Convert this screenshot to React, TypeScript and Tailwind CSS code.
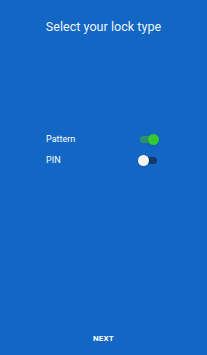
import React, { useState } from 'react';

function Toggle({ on, onClick }: { on: boolean; onClick: () => void }) {
  return (
    <button onClick={onClick} className="relative w-[21px] h-[11px] flex items-center">
      <span className={`absolute left-[2px] right-[2px] h-[7px] rounded-full ${on ? 'bg-[#2f8f6a]' : 'bg-[#17386a]'}`} />
      <span
        className={`absolute top-0 w-[11px] h-[11px] rounded-full shadow-sm ${on ? 'right-0 bg-[#34c934]' : 'left-0 bg-[#f5f5f5]'}`}
      />
    </button>
  );
}

export default function App() {
  const [pattern, setPattern] = useState(true);
  const [pin, setPin] = useState(false);

  return (
    <div className="w-[207px] h-[355px] bg-[#1367c4] flex flex-col text-white" style={{ fontFamily: 'Roboto, "Liberation Sans", sans-serif' }}>
      {/* 제목 */}
      <h1 className="mt-[19px] text-center text-[12.6px] leading-[16px] text-white/95">Select your lock type</h1>

      {/* 옵션 */}
      <div className="mt-[99px] pl-[46px] pr-[48px] flex flex-col gap-[10px]">
        {[
          { label: 'Pattern', on: pattern, toggle: () => setPattern(!pattern) },
          { label: 'PIN', on: pin, toggle: () => setPin(!pin) },
        ].map((row) => (
          <div key={row.label} className="flex items-center justify-between h-[11px]">
            <span className="text-[9px] leading-[11px]">{row.label}</span>
            <Toggle on={row.on} onClick={row.toggle} />
          </div>
        ))}
      </div>

      <div className="mt-auto mb-[11px] flex justify-center">
        <button className="text-[8px] leading-[10px] font-bold tracking-wide">NEXT</button>
      </div>
    </div>
  );
}
